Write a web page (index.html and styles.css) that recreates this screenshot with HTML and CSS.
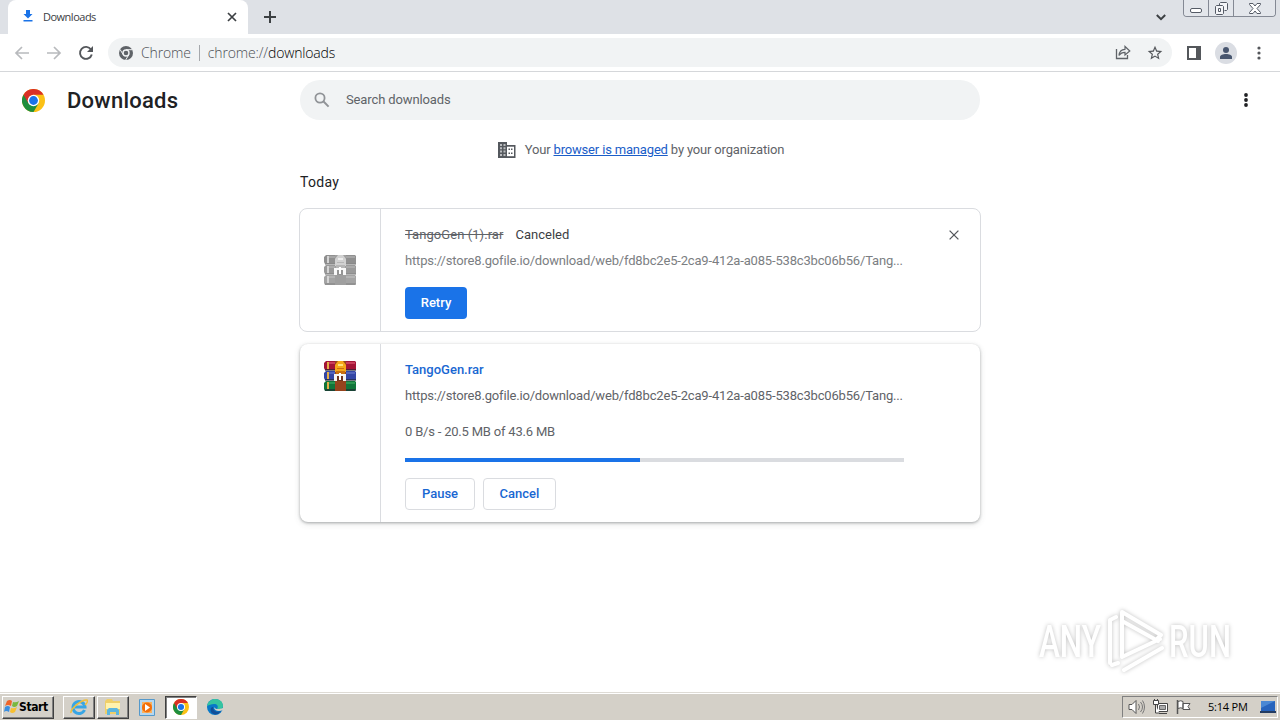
FILE: index.html
```html
<!DOCTYPE html>
<html lang="en">
<head>
    <meta charset="UTF-8">
    <meta name="viewport" content="width=device-width, initial-scale=1.0">
    <title>Downloads</title>
    <link rel="stylesheet" href="styles.css">
</head>
<body>
    <svg width="0" height="0" class="defs">
        <symbol id="chrome" viewBox="0 0 24 24">
            <circle cx="12" cy="12" r="12" fill="#fbc116"/>
            <path d="M12 12 1.6 6A12 12 0 0 0 12 24l5.2-9z" fill="#1e8e3e"/>
            <path d="M12 12 6.8 15 1.6 6A12 12 0 0 1 22.4 6H12z" fill="#d93025"/>
            <circle cx="12" cy="12" r="6" fill="#fff"/>
            <circle cx="12" cy="12" r="4.6" fill="#1a73e8"/>
        </symbol>
        <symbol id="rar" viewBox="0 0 32 32">
            <path d="M2 1h29l1 1v8H1L0 8V3z" fill="#a31537"/>
            <path d="M2 11h29l1 1v8H1l-1-2v-5z" fill="#3346a5"/>
            <path d="M2 21h29l1 1v7l-1 2H1l-1-2v-6z" fill="#11753a"/>
            <path d="M3 2h28v2H3z" fill="#c93e5b"/>
            <path d="M3 12h28v2H3z" fill="#5364bb"/>
            <path d="M3 22h28v2H3z" fill="#2b9650"/>
            <path d="M1 9h31v2H1zM1 19h31v2H1zM1 29h31v2H1z" fill="#202332" opacity=".6"/>
            <path d="M3 2h2v7H3zM3 12h2v7H3zM3 22h2v7H3z" fill="#e5af48"/>
            <path d="M11 1h11v30H11z" fill="#96431d"/>
            <path d="M11 12V5l3-4h5l3 4v7z" fill="#f5a719"/>
            <path d="M14 4h5v2h-5z" fill="#ffe17c"/>
            <path d="M13 8h7v1h-7zM12 11h9v3h-9z" fill="#c9700f"/>
            <path d="M10 14h12v7H10z" fill="#f5f5f2"/>
            <path d="M13 16h6v5h-6z" fill="#70341f"/>
            <path d="M15 13h2v7h-2z" fill="#fff"/>
        </symbol>
    </svg>

    <div class="tabstrip">
        <div class="tab">
            <svg class="tab-icon" width="12" height="14" viewBox="0 0 12 14"><path d="M4 1h4v4h2.500L6 9.500 1.500 5H4zM1.500 11h9v1.500h-9z" fill="#1a73e8"/></svg>
            <span>Downloads</span>
            <svg class="tab-close" width="10" height="10" viewBox="0 0 10 10"><path d="m1 1 8 8M9 1 1 9" stroke="#3c4043" stroke-width="1.7"/></svg>
        </div>
        <svg class="new-tab" width="12" height="12" viewBox="0 0 12 12"><path d="M6 0v12M0 6h12" stroke="#3c4043" stroke-width="2"/></svg>
        <svg class="tab-search" width="10" height="7" viewBox="0 0 10 7"><path d="m.8 1 4.2 4.2L9.200 1" fill="none" stroke="#3c4043" stroke-width="2"/></svg>
        <div class="win-buttons">
            <div class="win-btn"><svg width="12" height="5" viewBox="0 0 12 5"><rect x=".5" y=".5" width="11" height="4" rx="1.500" fill="#fff" stroke="#555b66"/></svg></div>
            <div class="win-btn"><svg width="13" height="13" viewBox="0 0 13 13"><path d="M4.500 3.500v-2l1-1h6l1 1v6l-1 1h-2M1.500 3.500h6l1 1v7l-1 1h-6l-1-1v-7z" fill="#f4f5f8" stroke="#555b66"/><path d="M3.500 6.500h2v3h-2z" fill="#fff" stroke="#555b66"/></svg></div>
            <div class="win-btn wide"><svg width="12" height="11" viewBox="0 0 12 11"><path d="M.5.5H4l2 2.500L8 .5h3.500v1L8 5.500l3.500 4v1H8L6 8l-2 2.500H.5v-1L4 5.500.5 1.500z" fill="#fff" stroke="#555b66"/></svg></div>
        </div>
    </div>

    <div class="toolbar">
        <svg class="nav-icon" width="16" height="14" viewBox="0 0 16 14"><path d="M15 7H2M8 1 2 7l6 6" fill="none" stroke="#b8babd" stroke-width="1.700"/></svg>
        <svg class="nav-icon" width="16" height="14" viewBox="0 0 16 14"><path d="M1 7h13M8 1l6 6-6 6" fill="none" stroke="#b8babd" stroke-width="1.700"/></svg>
        <svg class="nav-icon" width="16" height="16" viewBox="0 0 16 16"><path d="M13 4.500A6 6 0 1 0 13.800 9.500" fill="none" stroke="#54575b" stroke-width="1.900"/><path d="M15 1v6H9z" fill="#54575b"/></svg>
        <div class="omnibox">
            <svg width="14" height="14" viewBox="0 0 14 14"><circle cx="7" cy="7" r="7" fill="#5f6368"/><circle cx="7" cy="7" r="3" fill="#5f6368" stroke="#f1f3f4" stroke-width="1.400"/><path d="M7 3.700h6.300M4.200 8.700 1 3.400M9.800 8.700 6.700 14" stroke="#f1f3f4" stroke-width="1"/></svg>
            <span class="origin">Chrome</span>
            <span class="divider"></span>
            <span class="url">chrome://<b>downloads</b></span>
            <svg class="share" width="16" height="15" viewBox="0 0 16 15"><path d="M1.500 4v9.500h11V10" fill="none" stroke="#5f6368" stroke-width="1.300"/><path d="M4 10.500C4.300 6.500 6.500 4.500 10 4.300V1.500L14.800 6 10 10V7.300C7 7.300 5.400 8.300 4 10.500z" fill="none" stroke="#5f6368" stroke-width="1.200"/></svg>
            <svg width="16" height="16" viewBox="1 1 22 22"><path d="m22 9.240-7.190-.62L12 2 9.190 8.630 2 9.240l5.460 4.730L5.820 21 12 17.270 18.180 21l-1.630-7.030zM12 15.400l-3.760 2.270 1-4.280-3.320-2.880 4.380-.38L12 6.100l1.710 4.040 4.380.38-3.320 2.880 1 4.280z" fill="#54575b"/></svg>
        </div>
        <svg class="side-panel" width="14" height="14" viewBox="0 0 14 14"><path d="M0 0h14v14H0zm2 2v10h7V2z" fill="#54575b" fill-rule="evenodd"/></svg>
        <div class="avatar"><svg width="12" height="12" viewBox="0 0 12 12"><circle cx="6" cy="3" r="3" fill="#48566f"/><path d="M0 12v-2c0-2 3-3 6-3s6 1 6 3v2z" fill="#48566f"/></svg></div>
        <svg class="menu" width="4" height="14" viewBox="0 0 4 14"><g fill="#54575b"><circle cx="2" cy="2" r="1.600"/><circle cx="2" cy="7" r="1.600"/><circle cx="2" cy="12" r="1.600"/></g></svg>
    </div>

    <div class="page">
        <div class="header">
            <svg class="logo" width="23" height="23"><use href="#chrome"/></svg>
            <h1>Downloads</h1>
            <div class="search">
                <svg width="16" height="16" viewBox="0 0 16 16"><circle cx="6" cy="6" r="4.600" fill="none" stroke="#909397" stroke-width="1.800"/><path d="m9.300 9.300 5.300 5.300" stroke="#909397" stroke-width="2"/></svg>
                <span>Search downloads</span>
            </div>
            <svg class="more" width="4" height="14" viewBox="0 0 4 14"><g fill="#202124"><circle cx="2" cy="2" r="1.900"/><circle cx="2" cy="7" r="1.900"/><circle cx="2" cy="12" r="1.900"/></g></svg>
        </div>

        <div class="managed">
            <svg width="18" height="16" viewBox="0 0 18 16"><path d="M0 0h9v3h8.500v13H0z" fill="#54585d"/><path d="M2 2h2v2H2zm3.500 0h2v2h-2zM2 5.300h2v2H2zm3.500 0h2v2h-2zM2 8.600h2v2H2zm3.500 0h2v2h-2zM2 12h2v2H2zm3.500 0h2v2h-2z" fill="#b9bbbe"/><path d="M9 4.700h7v9.500H9z" fill="#fff"/><path d="M10.500 6.500h1.500V8h-1.500zm2.500 0h1.500V8H13zm-2.500 4h1.500V12h-1.500zm2.500 0h1.500V12H13z" fill="#54585d"/></svg>
            <p>Your <a href="#">browser is managed</a> by your organization</p>
        </div>

        <div class="downloads">
            <h2>Today</h2>

            <div class="item canceled">
                <div class="file-icon"><svg width="32" height="32"><use href="#rar"/></svg></div>
                <div class="details">
                    <div class="name"><s>TangoGen (1).rar</s><span class="tag">Canceled</span></div>
                    <div class="source">https://store8.gofile.io/download/web/fd8bc2e5-2ca9-412a-a085-538c3bc06b56/Tang...</div>
                    <div class="actions"><button class="retry">Retry</button></div>
                </div>
                <svg class="remove" width="10" height="10" viewBox="0 0 10 10"><path d="m.6.6 8.800 8.800M9.400.6.6 9.400" stroke="#54575b" stroke-width="1.300"/></svg>
            </div>

            <div class="item active">
                <div class="file-icon"><svg width="32" height="32"><use href="#rar"/></svg></div>
                <div class="details">
                    <div class="name"><a class="file-link">TangoGen.rar</a></div>
                    <div class="source">https://store8.gofile.io/download/web/fd8bc2e5-2ca9-412a-a085-538c3bc06b56/Tang...</div>
                    <div class="status">0 B/s - 20.5 MB of 43.6 MB</div>
                    <div class="progress"><div class="bar" style="width: 47%"></div></div>
                    <div class="actions"><button class="pause">Pause</button><button class="cancel">Cancel</button></div>
                </div>
            </div>
        </div>
    </div>

    <svg class="watermark" width="230" height="80" viewBox="0 0 230 80">
        <g class="watermark-shape">
            <text x="8" y="54" textLength="62" lengthAdjust="spacingAndGlyphs">ANY</text>
            <text x="138" y="54" textLength="62" lengthAdjust="spacingAndGlyphs">RUN</text>
            <path d="M79 60V17l6-3M91 53V9l39 23-5 5M91 18l36 20M91 54l38-18M81 62l6-2M93 67l38-22"/>
        </g>
    </svg>

    <div class="taskbar">
        <div class="start">
            <svg width="16" height="16" viewBox="0 0 16 16"><path d="M3 2q3-2 5 0L7 7Q4 5 1 7z" fill="#ef6429"/><path d="M9 3q3 1 6-1l-2 5q-3 2-5 0z" fill="#79b83e"/><path d="M1 8q3-2 5 0l-1 5q-3-2-5 0z" fill="#3a8ee0"/><path d="M7 9q3 1 6-1l-2 5q-3 2-5 0z" fill="#f8c031"/></svg>
            <span>Start</span>
        </div>
        <div class="task">
            <svg width="18" height="18" viewBox="0 0 18 18"><path d="M14.500 12A6 6 0 1 1 15 9H5" fill="none" stroke="#38a6e5" stroke-width="3"/><path d="M1 15C0 11 12 1 17 2c1 1 0 3-2 5" fill="none" stroke="#f1bf39" stroke-width="1.500"/></svg>
        </div>
        <div class="task">
            <svg width="18" height="18" viewBox="0 0 18 18"><path d="M1 3 3 1h5l1 2h7v13H1z" fill="#efcf68"/><path d="M2 5h14v6H2z" fill="#fff2ad"/><path d="M3 17v-5l2-2h8l2 2v5h-3v-3H6v3z" fill="#5cb6de"/></svg>
        </div>
        <div class="task plain">
            <svg width="16" height="17" viewBox="0 0 16 17"><path d="M.5.5h15v16H.5z" fill="#b6d7ef" stroke="#5599cb"/><path d="M3 3h10v11H3z" fill="#f9b260"/><circle cx="8" cy="8.500" r="5" fill="#f36f0a"/><path d="m6 5 5 3.500L6 12z" fill="#fff"/></svg>
        </div>
        <div class="task pressed"><svg width="16" height="16"><use href="#chrome"/></svg></div>
        <div class="task plain edge">
            <svg width="16" height="16" viewBox="0 0 16 16"><circle cx="8" cy="8" r="8" fill="#0879c8"/><path d="M0 7C1 2 5 0 8 0c5 0 8 3 8 7 0 3-3 4-6 3 2-3 0-5-3-5-3 0-5 1-7 2z" fill="#35c4a0"/><path d="M6 8c0 4 4 6 8 4-3 5-8 4-10 1-1-3 0-5 2-5z" fill="#124e98"/><path d="M7 8c1 2 4 3 9 1v2c-4 2-9 1-9-3z" fill="#d4d0c8"/></svg>
        </div>
        <div class="tray">
            <svg width="18" height="16" viewBox="0 0 18 16"><path d="M1 5.500h3L8 1.500v13L4 10.500H1z" fill="#fff" stroke="#555"/><path d="M10.500 5q2 3 0 6M12.500 3q4 5 0 10M14.500 1.500q4 6.500 0 13" fill="none" stroke="#777"/></svg>
            <svg width="17" height="16" viewBox="0 0 17 16"><path d="M5.500 4.500h10v8h-10zM7 14.500h8" fill="#fff" stroke="#444"/><path d="M7.500 6.500h6v4h-6z" fill="#aaa" stroke="#666"/><path d="M1.500 1.500h5v4h-5zM3.500 6v8h4" fill="#fff" stroke="#444"/><path d="M2.500 0v2M5.500 0v2" stroke="#444"/></svg>
            <svg width="17" height="16" viewBox="0 0 17 16"><path d="M2.500 1v14" stroke="#555" stroke-width="1.500"/><path d="M3 2.500q3-1.500 5 0v7q-2-1.500-5 0zM8 4.500h7l-2 3 2 3H8z" fill="#fff" stroke="#555"/></svg>
            <span class="clock">5:14 PM</span>
            <svg width="16" height="14" viewBox="0 0 16 14"><path d="M1 1h14v10H1z" fill="#2764bd"/><path d="M1 1h14L1 8z" fill="#4a88d4"/><path d="M0 11h16v2H0z" fill="#243c62"/></svg>
        </div>
    </div>
</body>
</html>
```
FILE: styles.css
```css
* { box-sizing: border-box; }
body { margin: 0; height: 720px; overflow: hidden; display: flex; flex-direction: column; background: #fff; font-family: Roboto, "Liberation Sans", sans-serif; font-size: 13px; color: #202124; }
svg { display: block; flex: none; }
.defs { position: absolute; }

/* browser frame */
.tabstrip { height: 34px; flex: none; display: flex; background: #dee1e6; padding-left: 8px; font-family: "Open Sans", sans-serif; }
.tab { width: 240px; display: flex; align-items: center; background: #fff; border-radius: 8px 8px 0 0; padding: 0 11px 2px 14px; font-size: 11px; color: #3c4043; }
.tab span { margin-left: 9px; letter-spacing: -0.5px; }
.tab-close { margin: 2px 0 0 auto; }
.new-tab { margin: 11px 0 0 16px; }
.tab-search { margin: 14px 17px 0 auto; }
.win-buttons { display: flex; width: 93px; height: 17px; margin-right: 4px; border: 1px solid #848994; border-top: 0; border-radius: 0 0 4px 4px; overflow: hidden; }
.win-btn { width: 25px; flex: none; display: flex; align-items: center; justify-content: center; border-right: 1px solid #848994; background: #e3e6eb; }
.win-btn:first-child { align-items: flex-end; padding-bottom: 3px; }
.win-btn.wide { width: 41px; border-right: 0; }
.toolbar { height: 38px; flex: none; display: flex; align-items: center; border-bottom: 1px solid #d5d7da; padding: 0 19px 0 14px; }
.nav-icon { margin-right: 16px; }
.omnibox { width: 1064px; height: 29px; margin-left: -2px; border-radius: 15px; background: #f1f3f4; display: flex; align-items: center; padding: 0 9px 0 11px; font-family: "Open Sans", sans-serif; font-size: 14px; font-weight: 300; color: #4c5054; }
.origin { margin-left: 8px; letter-spacing: -0.15px; }
.divider { width: 1px; height: 16px; background: #a5a8ac; margin: 0 8px; }
.url { letter-spacing: -0.15px; }
.url b { font-weight: 300; color: #000; }
.share { margin: 0 16px 0 auto; }
.side-panel { margin-left: 15px; }
.avatar { width: 22px; height: 22px; margin-left: 14px; border-radius: 50%; background: #dadde3; display: flex; align-items: center; justify-content: center; }
.menu { margin-left: 20px; }

/* downloads page */
.page { flex: 1; }
.header { height: 56px; display: flex; align-items: center; padding: 0 32px 0 22px; }
.header h1 { width: 233px; margin: 0 0 0 22px; font-size: 22px; font-weight: 500; letter-spacing: 0.25px; }
.search { width: 680px; height: 40px; border-radius: 20px; background: #f1f3f4; display: flex; align-items: center; padding-left: 14px; color: #5f6368; }
.search span { margin: 0 0 2px 16px; letter-spacing: -0.12px; }
.more { margin-left: auto; }
.managed { height: 44px; display: flex; align-items: center; justify-content: center; gap: 9px; color: #5f6368; padding-left: 2px; }
.managed p { margin: 0 0 2px; letter-spacing: -0.17px; }
.managed a { color: #1a5dc8; }
.downloads { width: 682px; margin: 0 auto; }
.downloads h2 { height: 36px; line-height: 21px; margin: 0; padding-left: 1px; font-size: 14px; font-weight: 400; letter-spacing: 0.3px; }
.item { display: flex; position: relative; border-radius: 8px; }
.file-icon { width: 81px; flex: none; border-right: 1px solid #dadce0; padding-left: 24px; }
.details { width: 524px; padding-left: 24px; }
.name { line-height: 20px; font-weight: 500; }
.name .tag { margin-left: 12px; font-weight: 400; color: #3c4043; }
.source { line-height: 20px; margin-top: 6px; white-space: nowrap; letter-spacing: -0.17px; color: #5f6368; }
.actions { display: flex; gap: 8px; }
.actions button { height: 32px; padding: 0 0 2px; border: 1px solid #dadce0; border-radius: 4px; background: #fff; color: #1967d2; font-family: inherit; font-size: 13px; font-weight: 500; }
.canceled { height: 124px; border: 1px solid #dadce0; padding: 0; }
.canceled .file-icon { padding-top: 45px; }
.canceled .file-icon svg { filter: grayscale(1); opacity: 0.55; }
.canceled .details { padding-top: 16px; }
.canceled s { font-weight: 400; letter-spacing: 0.06px; color: #5f6368; }
.canceled .source { color: #7b7e82; }
.canceled .actions { margin-top: 16px; }
.actions .retry { width: 62px; border: 0; background: #1a73e8; color: #fff; }
.remove { position: absolute; right: 21px; top: 21px; }
.active { height: 178px; margin: 12px 1px 0; box-shadow: 0 1px 3px rgba(60,64,67,0.4), 0 2px 7px rgba(60,64,67,0.12); }
.active .file-icon { padding-top: 16px; }
.active .details { padding-top: 16px; }
.file-link { color: #1967d2; }
.status { line-height: 20px; margin-top: 16px; letter-spacing: -0.2px; color: #5f6368; }
.progress { width: 499px; height: 4px; margin: 16px 0; background: #dadce0; }
.bar { height: 4px; background: #1a73e8; }
.pause { width: 70px; }
.cancel { width: 73px; }

.watermark { position: absolute; left: 1031px; top: 603px; }
.watermark-shape { filter: drop-shadow(0 0 2px rgba(0,0,0,0.25)); }
.watermark text { font: 500 44px Roboto, sans-serif; fill: #fff; }
.watermark path { fill: none; stroke: #fff; stroke-width: 4; stroke-linecap: round; stroke-linejoin: round; }

/* windows taskbar */
.taskbar { height: 28px; flex: none; display: flex; align-items: center; background: #d4d0c8; border-top: 1px solid #dedbd5; box-shadow: inset 0 1px #fff; padding: 2px 2px 1px 2px; }
.start, .task { height: 23px; display: flex; align-items: center; border: 1px solid; border-color: #fff #404040 #404040 #fff; box-shadow: inset -1px -1px #808080; }
.start { width: 52px; padding-left: 1px; font: bold 12px "DejaVu Sans Condensed", "DejaVu Sans", sans-serif; letter-spacing: -0.4px; color: #000; margin-right: 9px; }
.start span { margin: 0 0 1px -1px; }
.task { width: 32px; justify-content: center; margin-right: 2px; }
.task.plain { border-color: transparent; box-shadow: none; }
.task.pressed { background: #fff; border-color: #404040 #fff #fff #404040; box-shadow: inset 1px 1px #808080; }
.tray { width: 156px; height: 22px; margin-left: auto; padding: 0 1px 0 5px; display: flex; align-items: center; border: 1px solid; border-color: #808080 #fff #fff #808080; gap: 6px; }
.clock { margin: 0 auto 1px 10px; font: 11px "Open Sans", sans-serif; letter-spacing: -0.2px; color: #000; white-space: nowrap; }
```
